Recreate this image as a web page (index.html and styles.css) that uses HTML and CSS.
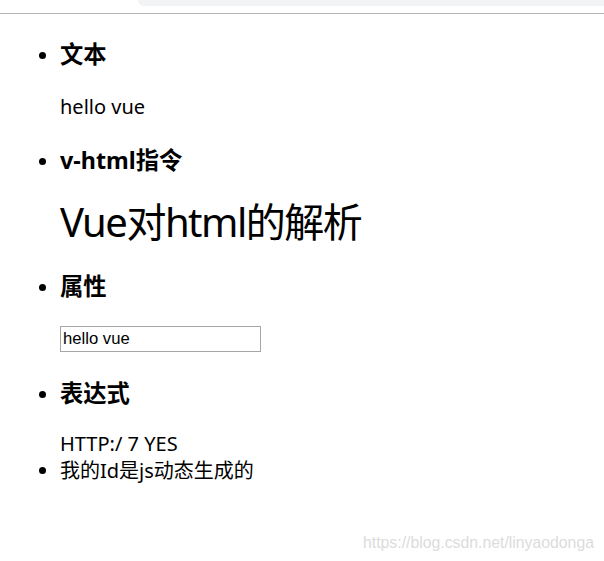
FILE: index.html
```html
<!DOCTYPE html>
<html lang="zh-CN">
<head>
<meta charset="utf-8">
<title>Vue 模板语法</title>
<link rel="stylesheet" href="styles.css">
</head>
<body>
<div class="chrome"><div class="omnibox"></div></div>
<div class="page">
  <ul class="list">
    <li>
      <h4 class="title">文本</h4>
      <div class="text">hello vue</div>
    </li>
    <li>
      <h4 class="title">v-html指令</h4>
      <div class="big">Vue对html的解析</div>
    </li>
    <li>
      <h4 class="title">属性</h4>
      <input class="field" type="text" value="hello vue">
    </li>
    <li>
      <h4 class="title">表达式</h4>
      <div class="text">HTTP:/ 7 YES</div>
    </li>
    <li class="text">我的Id是js动态生成的</li>
  </ul>
</div>
<div class="watermark">https://blog.csdn.net/linyaodonga</div>
</body>
</html>
```

FILE: styles.css
```css
html, body {
  margin: 0;
  padding: 0;
  background: #ffffff;
}

body {
  position: relative;
  min-height: 561px;
  font-family: "Noto Sans", "Noto Sans CJK SC", sans-serif;
  font-size: 20px;
  line-height: 26.4px;
  color: #000000;
}

.chrome {
  height: 13px;
  border-bottom: 1px solid #b4b4b4;
  background: #ffffff;
}

.omnibox {
  margin-left: 138px;
  height: 6px;
  background: #f1f3f4;
  border-bottom-left-radius: 12px;
}

.page {
  padding: 0 10px;
}

.list {
  margin: 0;
  padding: 0 0 0 50px;
  list-style: disc;
}

.title {
  margin: 26.6px 0;
  font-size: 23.3px;
  font-weight: bold;
  line-height: 26.4px;
}

.list > li:nth-child(4) .title {
  margin-top: 28px;
}

.text {
  margin: 0;
}

.big {
  margin: 0 0 30px;
  font-size: 40px;
  line-height: 43px;
  font-weight: normal;
  letter-spacing: -1.5px;
}

.field {
  display: block;
  box-sizing: border-box;
  width: 201px;
  height: 26px;
  margin: 0;
  padding: 0 2px;
  border: 1px solid #a6a6a6;
  border-radius: 0;
  font-family: "Liberation Sans", Arial, sans-serif;
  font-size: 16.67px;
  color: #000000;
  background: #ffffff;
  outline: none;
}

.list > li:nth-child(4) .title + .text {
  margin-top: -1.4px;
}

.watermark {
  position: absolute;
  left: 363px;
  top: 533px;
  font-family: "Liberation Sans", Arial, sans-serif;
  font-size: 15.8px;
  line-height: 20px;
  color: #dcdcdc;
  white-space: nowrap;
}
```
